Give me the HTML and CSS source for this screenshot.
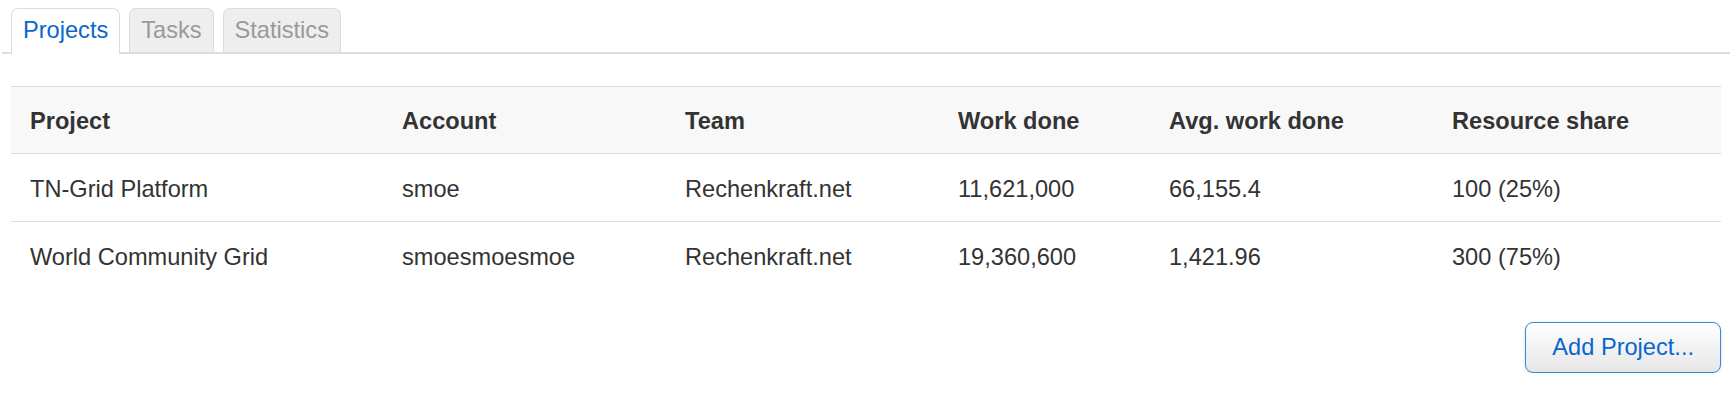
FILE: index.html
```html
<!DOCTYPE html>
<html>
<head>
<meta charset="utf-8">
<link rel="stylesheet" href="styles.css">
</head>
<body>
<nav class="tabs">
  <div class="tab active">Projects</div>
  <div class="tab">Tasks</div>
  <div class="tab">Statistics</div>
</nav>
<main class="panel">
  <table class="grid">
    <colgroup>
      <col class="c1"><col class="c2"><col class="c3"><col class="c4"><col class="c5"><col class="c6">
    </colgroup>
    <thead>
      <tr><th>Project</th><th>Account</th><th>Team</th><th>Work done</th><th>Avg. work done</th><th>Resource share</th></tr>
    </thead>
    <tbody>
      <tr><td>TN-Grid Platform</td><td>smoe</td><td>Rechenkraft.net</td><td>11,621,000</td><td>66,155.4</td><td>100 (25%)</td></tr>
      <tr><td>World Community Grid</td><td>smoesmoesmoe</td><td>Rechenkraft.net</td><td>19,360,600</td><td>1,421.96</td><td>300 (75%)</td></tr>
    </tbody>
  </table>
  <div class="actions">
    <button class="btn">Add Project...</button>
  </div>
</main>
</body>
</html>
```
FILE: styles.css
```css
html, body {
  margin: 0;
  padding: 0;
  background: #fff;
}
body {
  font-family: "Liberation Sans", Arial, Helvetica, sans-serif;
  font-size: 23.6px;
  color: #333;
}
.tabs {
  display: flex;
  gap: 9px;
  margin: 8px 6px 0 2px;
  padding-left: 9px;
  border-bottom: 2px solid #dedede;
}
.tab {
  padding: 8px 11px;
  line-height: 27px;
  border: 1px solid #dcdcdc;
  border-bottom: none;
  border-radius: 7px 7px 0 0;
  background: #eeeeee;
  color: #999;
}
.tab.active {
  background: #fff;
  color: #0a66cc;
  margin-bottom: -2px;
  padding-bottom: 10px;
}
.panel {
  margin: 32px 15px 0 11px;
}
.grid {
  width: 100%;
  border-collapse: collapse;
  table-layout: fixed;
}
.c1 { width: 372px; }
.c2 { width: 283px; }
.c3 { width: 273px; }
.c4 { width: 211px; }
.c5 { width: 283px; }
.c6 { width: 288px; }
.grid th, .grid td {
  text-align: left;
  padding: 19px 10px 19px 19px;
  line-height: 28px;
  white-space: nowrap;
}
.grid th {
  font-weight: bold;
  background: #f8f8f8;
  border-top: 1px solid #dddddd;
  border-bottom: 1px solid #dddddd;
  padding-top: 20px;
  padding-bottom: 18px;
}
.grid td {
  border-top: 1px solid #dddddd;
  padding-top: 21px;
  padding-bottom: 18px;
}
.actions {
  display: flex;
  justify-content: flex-end;
  margin-top: 33px;
}
.btn {
  font-family: inherit;
  font-size: 23.6px;
  height: 51px;
  padding: 0 26px;
  border: 1px solid #3a86d8;
  border-radius: 8px;
  background: linear-gradient(#ffffff, #e6e6e6);
  color: #0a66cc;
  box-shadow: 0 1px 3px rgba(0, 0, 0, 0.15);
  cursor: pointer;
}
```
